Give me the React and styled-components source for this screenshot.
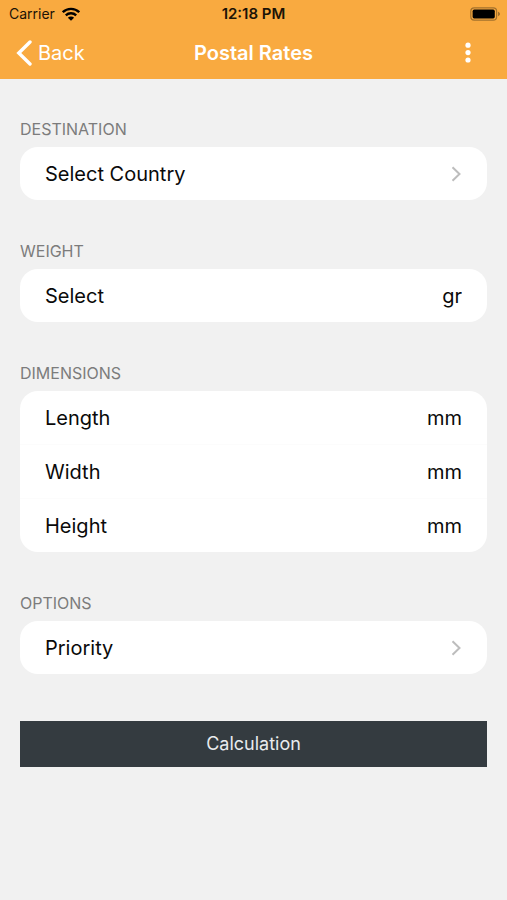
import React from 'react';
import styled, { createGlobalStyle } from 'styled-components';

const colors = {
  orange: '#f9aa40',
  page: '#f1f1f1',
  white: '#ffffff',
  black: '#0a0a0a',
  label: '#7c7c7c',
  arrow: '#bdbdbd',
  divider: '#fcfcfc',
  dark: '#343b40',
  buttonText: '#e9ecee',
};

const GlobalStyle = createGlobalStyle`
  * {
    box-sizing: border-box;
  }
  body {
    margin: 0;
    background: ${colors.page};
    font-family: Inter, 'Liberation Sans', sans-serif;
    color: ${colors.black};
  }
  button,
  input {
    font: inherit;
    color: inherit;
    border: 0;
    padding: 0;
    margin: 0;
    background: none;
  }
`;

const Header = styled.header`
  background: ${colors.orange};
`;

const Bar = styled.div`
  display: grid;
  grid-template-columns: 1fr auto 1fr;
  align-items: center;
`;

const StatusBar = styled(Bar)`
  height: 27px;
  padding: 0 6px;
  font-size: 14px;
  line-height: 20px;
  color: #1c1306;
`;

const NavBar = styled(Bar)`
  height: 52px;
  padding: 0 16px;
  color: ${colors.white};
`;

const Carrier = styled.div`
  display: flex;
  align-items: center;
  gap: 7px;
  padding-left: 3px;
`;

const Time = styled.time`
  font-size: 15px;
  font-weight: 600;
`;

const EndIcon = styled.div`
  display: flex;
  justify-content: flex-end;
`;

const BackButton = styled.button`
  display: flex;
  align-items: center;
  justify-self: start;
  gap: 6px;
  font-size: 20px;
  line-height: 24px;
`;

const Title = styled.h1`
  margin: 0;
  font-size: 20px;
  line-height: 24px;
  font-weight: 600;
`;

const MenuButton = styled.button`
  display: flex;
  justify-self: end;
  padding: 0 16px;
`;

const Form = styled.form`
  padding: 40px 20px;
`;

const Section = styled.section`
  margin-bottom: 41px;

  &:last-of-type {
    margin-bottom: 47px;
  }
`;

const SectionTitle = styled.h2`
  margin: 0 0 8px;
  font-size: 16px;
  line-height: 20px;
  font-weight: 400;
  text-transform: uppercase;
  color: ${colors.label};
`;

const Card = styled.div`
  border-radius: 18px;
  background: ${colors.white};
  overflow: hidden;

  > * + * {
    border-top: 1px solid ${colors.divider};
    box-sizing: content-box;
  }
`;

const Row = styled.div`
  display: flex;
  align-items: center;
  justify-content: space-between;
  height: 53px;
  padding: 0 25px;
  font-size: 20px;
  line-height: 24px;
`;

const LinkRow = styled(Row).attrs({ as: 'button', type: 'button' })`
  width: 100%;
`;

const Input = styled.input`
  flex: 1;
  min-width: 0;
  text-align: right;
  outline: none;

  &::placeholder {
    color: ${colors.black};
    opacity: 1;
  }
`;

const SubmitButton = styled.button`
  display: block;
  width: 100%;
  height: 46px;
  font-size: 18px;
  line-height: 24px;
  background: ${colors.dark};
  color: ${colors.buttonText};
`;

const WifiIcon = () => (
  <svg width="18" height="14" viewBox="0 0 18 14" aria-hidden="true">
    <g fill="none" stroke="#000" strokeWidth="2.3">
      <path d="M0.8 5.2a11.6 11.6 0 0 1 16.4 0" />
      <path d="M3.8 8.4a7.4 7.4 0 0 1 10.4 0" />
    </g>
    <path d="M9 13.8L5.9 10.7a4.4 4.4 0 0 1 6.2 0z" fill="#000" />
  </svg>
);

const BatteryIcon = () => (
  <svg width="31" height="14" viewBox="0 0 31 14" aria-hidden="true">
    <rect
      x="0.8"
      y="0.8"
      width="25.8"
      height="12.4"
      rx="3.4"
      fill="none"
      stroke="#a3712c"
      strokeWidth="1.2"
    />
    <rect x="2.6" y="2.6" width="22.2" height="8.8" rx="1.6" fill="#000" />
    <path d="M28 4.8v4.4c1.2-.4 2-1.2 2-2.2s-.8-1.8-2-2.2z" fill="#a3712c" />
  </svg>
);

const BackIcon = () => (
  <svg width="16" height="26" viewBox="0 0 16 26" aria-hidden="true">
    <path
      d="M14 2L2.8 13L14 24"
      fill="none"
      stroke="#fff"
      strokeWidth="3.4"
      strokeLinecap="round"
      strokeLinejoin="miter"
    />
  </svg>
);

const DotsIcon = () => (
  <svg width="14" height="22" viewBox="0 0 14 22" aria-hidden="true">
    <g fill="#fff">
      <circle cx="7" cy="3.2" r="2.6" />
      <circle cx="7" cy="10.6" r="2.6" />
      <circle cx="7" cy="18" r="2.6" />
    </g>
  </svg>
);

const ArrowIcon = () => (
  <svg width="12" height="16" viewBox="0 0 12 16" aria-hidden="true">
    <path
      d="M2.5 1.2L9.5 8L2.5 14.8"
      fill="none"
      stroke={colors.arrow}
      strokeWidth="2"
    />
  </svg>
);

const SelectRow = ({ children }) => (
  <LinkRow>
    {children}
    <ArrowIcon />
  </LinkRow>
);

const InputRow = ({ id, label, unit }) => (
  <Row>
    <label htmlFor={id}>{label}</label>
    <Input id={id} inputMode="numeric" placeholder={unit} />
  </Row>
);

const dimensions = [
  { id: 'length', label: 'Length' },
  { id: 'width', label: 'Width' },
  { id: 'height', label: 'Height' },
];

const App = () => (
  <>
    <GlobalStyle />
    <Header>
      <StatusBar>
        <Carrier>
          Carrier
          <WifiIcon />
        </Carrier>
        <Time>12:18 PM</Time>
        <EndIcon>
          <BatteryIcon />
        </EndIcon>
      </StatusBar>
      <NavBar>
        <BackButton type="button">
          <BackIcon />
          Back
        </BackButton>
        <Title>Postal Rates</Title>
        <MenuButton type="button" aria-label="Menu">
          <DotsIcon />
        </MenuButton>
      </NavBar>
    </Header>
    <Form onSubmit={(e) => e.preventDefault()}>
      <Section>
        <SectionTitle>Destination</SectionTitle>
        <Card>
          <SelectRow>Select Country</SelectRow>
        </Card>
      </Section>
      <Section>
        <SectionTitle>Weight</SectionTitle>
        <Card>
          <InputRow id="weight" label="Select" unit="gr" />
        </Card>
      </Section>
      <Section>
        <SectionTitle>Dimensions</SectionTitle>
        <Card>
          {dimensions.map(({ id, label }) => (
            <InputRow key={id} id={id} label={label} unit="mm" />
          ))}
        </Card>
      </Section>
      <Section>
        <SectionTitle>Options</SectionTitle>
        <Card>
          <SelectRow>Priority</SelectRow>
        </Card>
      </Section>
      <SubmitButton type="submit">Calculation</SubmitButton>
    </Form>
  </>
);

export default App;
